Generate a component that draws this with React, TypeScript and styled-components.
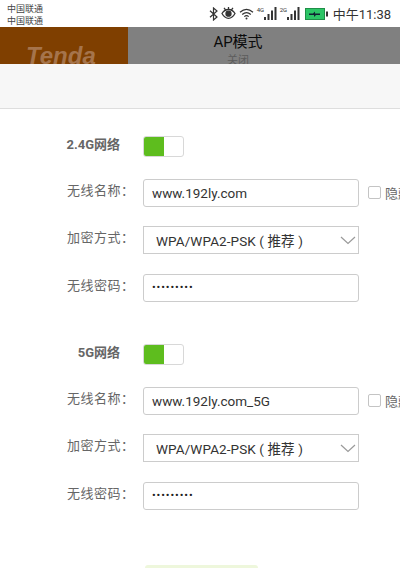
import React from 'react';
import styled, { createGlobalStyle } from 'styled-components';

const GlobalStyle = createGlobalStyle`
  html, body {
    margin: 0;
    padding: 0;
    background: #fff;
    overflow: hidden;
  }
  body {
    font-family: Roboto, "Noto Sans CJK SC", sans-serif;
  }
`;

const Eye = () => (
  <svg width="15" height="13" viewBox="0 0 15 13" fill="none" stroke="#333" strokeWidth="1.3">
    <path d="M1 6.500C3 3.200 5 2.500 7.500 2.500s4.500 .7 6.500 4c-2 3.600-4.500 4.800-6.500 4.800S3 10.100 1 6.500z" />
    <circle cx="7.500" cy="6.700" r="2.500" fill="#333" />
    <path d="M3 .8l1.600 2M12 .8l-1.600 2M7.500 0v2" />
  </svg>
);

const Bluetooth = () => (
  <svg width="9" height="14" viewBox="0 0 9 14" fill="none" stroke="#333" strokeWidth="1.200">
    <path d="M1 3.700l7 6.300-3.500 3V1L8 4 1 10.300" />
  </svg>
);

const Wifi = () => (
  <svg width="15" height="12" viewBox="0 0 15 12" fill="none" stroke="#333" strokeWidth="1.200">
    <path d="M1 4.200C5 .7 10 .7 14 4.200M3.200 6.500c2.700-2.300 6-2.300 8.600 0M5.300 8.600c1.400-1.100 3-1.100 4.400 0" />
    <circle cx="7.500" cy="10.600" r="1" fill="#333" stroke="none" />
  </svg>
);

const Signal = () => (
  <svg width="13" height="13" viewBox="0 0 13 13" fill="#333">
    <rect x="0" y="10" width="2" height="3" />
    <rect x="3.500" y="7" width="2" height="6" />
    <rect x="7" y="3.500" width="2" height="9.500" />
    <rect x="10.500" y="0" width="2" height="13" />
  </svg>
);

const Battery = () => (
  <svg width="25" height="12" viewBox="-2 0 25 12">
    <rect x="0.500" y="0.500" width="19" height="11" fill="#2cc566" stroke="#1f8f48" />
    <path d="M4 5.500h4l2-2v2h5v1.500h-4l-2 2V7H4z" fill="#123" />
    <rect x="21" y="3.500" width="2" height="5" fill="#333" />
  </svg>
);

const Chevron = () => (
  <svg width="16" height="9" viewBox="0 0 16 9" fill="none" stroke="#9a9a9a" strokeWidth="1.200">
    <path d="M1 1l7 6.500L15 1" />
  </svg>
);

type NetworkProps = {
  title: string;
  ssid: string;
  gap: number;
};

const Network: React.FC<NetworkProps> = ({ title, ssid, gap }) => (
  <Section $gap={gap}>
    <ToggleRow>
      <SectionTitle>{title}</SectionTitle>
      <Toggle>
        <ToggleOn />
      </Toggle>
    </ToggleRow>
    <FieldRow>
      <FieldLabel>无线名称：</FieldLabel>
      <TextBox>{ssid}</TextBox>
      <HideBox />
      <HideLabel>隐藏</HideLabel>
    </FieldRow>
    <FieldRow>
      <FieldLabel>加密方式：</FieldLabel>
      <SelectBox>
        <SelectText>WPA/WPA2-PSK ( 推荐 )</SelectText>
        <Chevron />
      </SelectBox>
    </FieldRow>
    <FieldRow>
      <FieldLabel>无线密码：</FieldLabel>
      <TextBox>
        <Dots>•••••••••</Dots>
      </TextBox>
    </FieldRow>
  </Section>
);

const App: React.FC = () => {
  return (
    <Page>
      <GlobalStyle />
      <StatusBar>
        <Carriers>
          <span>中国联通</span>
          <span>中国联通</span>
        </Carriers>
        <StatusIcons>
          <Bluetooth />
          <Eye />
          <Wifi />
          <NetTag>4G</NetTag>
          <Signal />
          <NetTag>2G</NetTag>
          <Signal />
          <Battery />
          <Clock>中午11:38</Clock>
        </StatusIcons>
      </StatusBar>
      <Header>
        <Brand>
          <BrandName>Tenda</BrandName>
        </Brand>
        <TitleBlock>
          <Title>AP模式</Title>
          <SubTitle>关闭</SubTitle>
        </TitleBlock>
      </Header>
      <Band />
      <Network title="2.4G网络" ssid="www.192ly.com" gap={26.6} />
      <Network title="5G网络" ssid="www.192ly.com_5G" gap={42} />
      <SaveButton />
    </Page>
  );
};

export default App;

const Page = styled.div`
  width: 400px;
  height: 568px;
  overflow: hidden;
  background: #fff;
`;

const StatusBar = styled.div`
  height: 27px;
  box-sizing: border-box;
  padding: 0 9px 0 7px;
  display: flex;
  align-items: center;
  justify-content: space-between;
  background: #fff;
`;

const Carriers = styled.div`
  display: flex;
  flex-direction: column;
  padding-top: 2px;
  font-size: 9px;
  line-height: 12px;
  color: #444;
`;

const StatusIcons = styled.div`
  display: flex;
  align-items: center;
  gap: 3px;
`;

const NetTag = styled.span`
  width: 6px;
  font-size: 6px;
  line-height: 12px;
  align-self: flex-start;
  margin-right: -2px;
  color: #333;
  white-space: nowrap;
`;

const Clock = styled.span`
  font-size: 13px;
  color: #333;
  margin-left: 2px;
`;

const Header = styled.div`
  height: 37px;
  display: flex;
  overflow: hidden;
  background: #808080;
`;

const Brand = styled.div`
  width: 128px;
  flex: none;
  background: #7f3f00;
  box-sizing: border-box;
  padding: 17px 0 0 26px;
`;

const BrandName = styled.div`
  font-family: "Liberation Sans", sans-serif;
  font-style: italic;
  font-weight: 700;
  font-size: 24px;
  line-height: 24px;
  color: #a5744c;
`;

const TitleBlock = styled.div`
  width: 220px;
  text-align: center;
`;

const Title = styled.div`
  font-size: 15px;
  line-height: 18px;
  margin-top: 6px;
  color: #0b0b0b;
`;

const SubTitle = styled.div`
  font-size: 11px;
  line-height: 14px;
  margin-top: 3px;
  color: #5c5c5c;
`;

const Band = styled.div`
  height: 44px;
  background: #f7f7f7;
  border-bottom: 1px solid #dedede;
`;

const Section = styled.div<{ $gap: number }>`
  margin-top: ${p => p.$gap}px;
  display: flex;
  flex-direction: column;
  gap: 19.5px;
`;

const ToggleRow = styled.div`
  display: flex;
  align-items: center;
  height: 21px;
  margin-bottom: 2.5px;
`;

const SectionTitle = styled.div`
  width: 120px;
  margin-right: 23px;
  padding-bottom: 6px;
  text-align: right;
  font-size: 13px;
  font-weight: 700;
  white-space: nowrap;
  color: #666;
`;

const Toggle = styled.div`
  width: 41px;
  height: 21px;
  box-sizing: border-box;
  border: 1px solid #d8d8d8;
  border-radius: 3px;
  background: #fff;
  overflow: hidden;
`;

const ToggleOn = styled.div`
  width: 20px;
  height: 100%;
  background: #5ebd1e;
`;

const FieldRow = styled.div`
  display: flex;
  align-items: center;
  height: 28px;
`;

const FieldLabel = styled.div`
  width: 143px;
  box-sizing: border-box;
  padding: 0 0 7px 67px;
  flex: none;
  font-size: 13px;
  letter-spacing: 0.5px;
  color: #666;
  white-space: nowrap;
`;

const TextBox = styled.div`
  width: 216px;
  height: 28px;
  flex: none;
  box-sizing: border-box;
  border: 1px solid #ccc;
  border-radius: 3px;
  padding-left: 8px;
  display: flex;
  align-items: center;
  font-size: 13.5px;
  color: #333;
`;

const Dots = styled.span`
  font-size: 11px;
  letter-spacing: 0.9px;
  color: #222;
`;

const SelectBox = styled(TextBox)`
  justify-content: space-between;
  padding: 0 2px 0 12px;
  border-radius: 0;
  white-space: nowrap;
`;

const SelectText = styled.span`
  white-space: pre;
  letter-spacing: 0.1px;
`;

const HideBox = styled.div`
  width: 13px;
  height: 13px;
  flex: none;
  margin-left: 9px;
  box-sizing: border-box;
  border: 1px solid #c4c4c4;
  border-radius: 2px;
`;

const HideLabel = styled.span`
  font-size: 13px;
  color: #666;
  margin-left: 4px;
  white-space: nowrap;
`;

const SaveButton = styled.div`
  width: 113px;
  height: 20px;
  margin: 55.6px 0 0 145px;
  border-radius: 3px;
  background: #eef7dc;
`;
